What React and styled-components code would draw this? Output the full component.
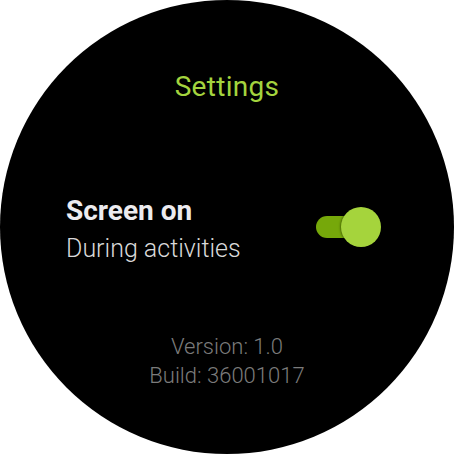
import React, { useState } from 'react';
import styled, { createGlobalStyle } from 'styled-components';

const GlobalStyle = createGlobalStyle`
  html, body {
    margin: 0;
    padding: 0;
    background: #ffffff;
  }
  body {
    font-family: Roboto, "Noto Sans", sans-serif;
  }
`;

// Round watch face
const Watch = styled.div`
  width: 454px;
  height: 454px;
  border-radius: 50%;
  background: #000000;
  overflow: hidden;
  display: flex;
  flex-direction: column;
  align-items: stretch;
  box-sizing: border-box;
  padding: 68px 0 0;
`;

const Title = styled.h1`
  margin: 0;
  text-align: center;
  color: #a4d43e;
  font-size: 28px;
  font-weight: 400;
  line-height: 38px;
  letter-spacing: 0.3px;
`;

// Setting row
const Row = styled.div`
  display: flex;
  align-items: flex-start;
  justify-content: space-between;
  margin-top: 87px;
  padding: 0 73px 0 66px;
`;

const Labels = styled.div`
  display: flex;
  flex-direction: column;
`;

const Label = styled.span`
  color: #ecebef;
  font-size: 28px;
  font-weight: 700;
  line-height: 36px;
`;

const Sub = styled.span`
  color: #d9d9d9;
  font-size: 25px;
  font-weight: 300;
  line-height: 40px;
`;

// Toggle
const Switch = styled.button`
  position: relative;
  flex: none;
  width: 65px;
  height: 40px;
  margin-top: 14px;
  padding: 0;
  border: 0;
  background: transparent;
  cursor: pointer;
`;

const Track = styled.span`
  position: absolute;
  left: 0;
  top: 9px;
  width: 56px;
  height: 22px;
  border-radius: 11px;
  background: ${p => (p.$on ? '#76a80a' : '#555')};
`;

const Thumb = styled.span`
  position: absolute;
  top: 0;
  left: ${p => (p.$on ? '25px' : '0')};
  width: 40px;
  height: 40px;
  border-radius: 50%;
  background: ${p => (p.$on ? '#a5d43c' : '#bbb')};
  box-shadow: -1px 0 2px rgba(0, 0, 0, 0.35);
`;

// Footer info
const Info = styled.div`
  margin-top: 63px;
  display: flex;
  flex-direction: column;
  align-items: center;
  color: #7b7b7b;
  font-size: 22px;
  font-weight: 300;
  line-height: 29px;
`;

export default function App() {
  const [on, setOn] = useState(true);
  return (
    <>
      <GlobalStyle />
      <Watch>
        <Title>Settings</Title>
        <Row>
          <Labels>
            <Label>Screen on</Label>
            <Sub>During activities</Sub>
          </Labels>
          <Switch onClick={() => setOn(!on)} aria-label="Screen on">
            <Track $on={on} />
            <Thumb $on={on} />
          </Switch>
        </Row>
        <Info>
          <span>Version: 1.0</span>
          <span>Build: 36001017</span>
        </Info>
      </Watch>
    </>
  );
}
